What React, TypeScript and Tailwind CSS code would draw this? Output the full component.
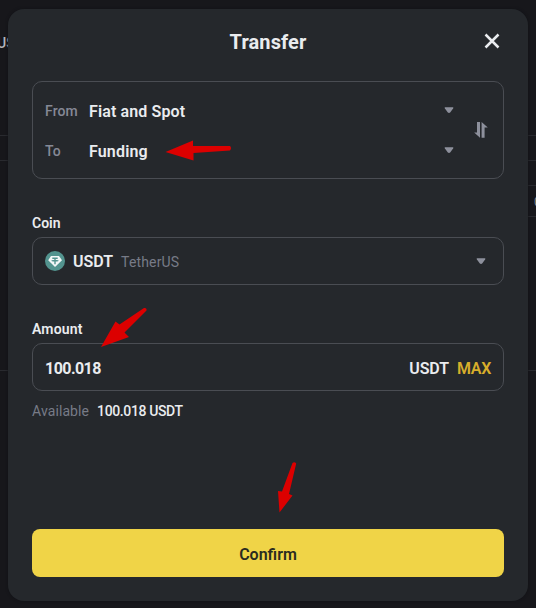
import type { ReactNode } from "react";

function Caret() {
  return (
    <svg width="10" height="7" viewBox="0 0 10 7" className="block shrink-0" fill="#8d909c">
      <path d="M1.2 .2h7.6q1 .1.4 1L6.4 5.2Q5 6.6 3.6 5.2L.8 1.2Q.2.3 1.2.2Z" />
    </svg>
  );
}

function SwapIcon() {
  return (
    <svg width="14" height="16" viewBox="0 0 14 16" className="block" fill="#8d909c">
      <path d="M3 0h3v15.8L.2 10.4H3Z" />
      <path d="M7.6 15.8h3V5.6h3.2L7.6 0Z" />
    </svg>
  );
}

function TetherIcon() {
  return (
    <svg width="20" height="20" viewBox="0 0 20 20" className="block shrink-0">
      <circle cx="10" cy="10" r="10" fill="#53948f" />
      <path d="M6 5h8l3 4.3L10 16 3.2 9.3Z" fill="#f3f8f8" />
      <path d="M7.3 6.6h5.4v1.3h-2v1c2 .1 3 .4 3 .8s-1 .8-3 .9v2.6H9.3v-2.6c-2-.1-3-.4-3-.9s1-.7 3-.8v-1h-2Z" fill="#53948f" />
    </svg>
  );
}

function SelectRow({ label, children }: { label: string; children: ReactNode }) {
  return (
    <div className="flex h-10 items-center">
      <span className="w-11 pt-[2px] text-[14px] font-medium tracking-[0.12px] text-[#858996]">{label}</span>
      <span className="grow pt-[3px] text-[16px] font-semibold">{children}</span>
      <Caret />
    </div>
  );
}

const lines = [
  "left-0 top-[135px] w-2",
  "left-0 top-[160px] w-2",
  "left-0 top-[370px] w-2",
  "left-[528px] top-[135px] w-2",
  "left-[528px] top-[160px] w-2",
  "left-[528px] top-[185px] w-2",
  "left-[528px] top-[216px] w-2",
  "left-[528px] top-[370px] w-2",
];

export default function App() {
  return (
    <div className="relative h-[608px] w-[536px] overflow-hidden bg-[#17171b] px-2 pt-[9px] font-['Roboto',sans-serif] text-[#eaecef]">
      {lines.map((line) => (
        <div key={line} className={`absolute h-px bg-[#292a2f] ${line}`} />
      ))}
      <span className="absolute -left-[3px] top-[35px] text-[14px] leading-4 font-medium text-[#b5b7bd]">US</span>
      <span className="absolute left-[534px] top-[194px] text-[12px] leading-4 text-[#8a8c92]">0</span>

      <section className="relative flex h-[592px] flex-col rounded-2xl bg-[#25282c] px-6 shadow-[0_0_3px_#111216]">
        <header className="flex h-[72px] items-start pt-[19px]">
          <span className="w-5" />
          <h1 className="grow text-center text-[20px] leading-7 font-bold tracking-[0.1px]">Transfer</h1>
          <button aria-label="Close" className="mt-[5px] mr-1">
            <svg width="16" height="16" viewBox="0 0 16 16" className="block" fill="none" stroke="#eaecef" strokeWidth="2.5">
              <path d="m1.5 1.5 13 13m0-13-13 13" />
            </svg>
          </button>
        </header>

        <div className="flex h-[98px] shrink-0 items-center rounded-[10px] border border-[#4a4d53] pr-[15px] pl-3">
          <div className="grow">
            <SelectRow label="From"><span className="tracking-[0.12px]">Fiat and Spot</span></SelectRow>
            <SelectRow label="To"><span className="tracking-[0.16px]">Funding</span></SelectRow>
          </div>
          <button aria-label="Swap" className="ml-5"><SwapIcon /></button>
        </div>

        <div className="mt-[34px] h-6 text-[14px] leading-5 font-semibold">Coin</div>
        <div className="flex h-12 shrink-0 items-center rounded-[10px] border border-[#4a4d53] pr-[17px] pl-3">
          <TetherIcon />
          <span className="ml-2 pt-[2px] text-[16px] font-semibold">USDT</span>
          <span className="ml-2 grow pt-[2px] text-[14px] tracking-[0.15px] text-[#777b87]">TetherUS</span>
          <Caret />
        </div>

        <div className="mt-[34px] h-6 text-[14px] leading-5 font-semibold tracking-[0.15px]">Amount</div>
        <div className="flex h-12 shrink-0 items-center rounded-[10px] border border-[#4a4d53] px-3 pt-[3px] text-[16px] font-semibold">
          <span className="grow font-bold tracking-[-0.55px]">100.018</span>
          <span className="tracking-[-0.12px]">USDT</span>
          <span className="ml-2 tracking-[-0.3px] text-[#d8ae2b]">MAX</span>
        </div>
        <div className="mt-[10px] flex gap-2 text-[14px] leading-5">
          <span className="tracking-[0.1px] text-[#777b87]">Available</span>
          <span className="font-medium tracking-[-0.38px]">100.018 USDT</span>
        </div>

        <button className="mt-auto mb-6 h-12 shrink-0 rounded-lg bg-[#f0d447] pt-[3px] text-[16px] font-semibold text-[#2a2b20]">Confirm</button>
      </section>

      <svg className="pointer-events-none absolute inset-0" width="536" height="608" viewBox="0 0 536 608" fill="#dc0000">
        <path d="M165.5 152 193 140.5V146L230 146Q232 148 230 150.5L193.5 153V160.5Z" />
        <path d="M101 347 115.5 321.5 119.5 324.5 144 308Q147 307.5 146.5 310.5L124.5 332.5 129 337Z" />
        <path d="M279.5 512.5 278 491 282 491.5 292.5 463Q294.5 461.5 296.2 463.5L289 494 292.5 495.5Z" />
      </svg>
    </div>
  );
}
